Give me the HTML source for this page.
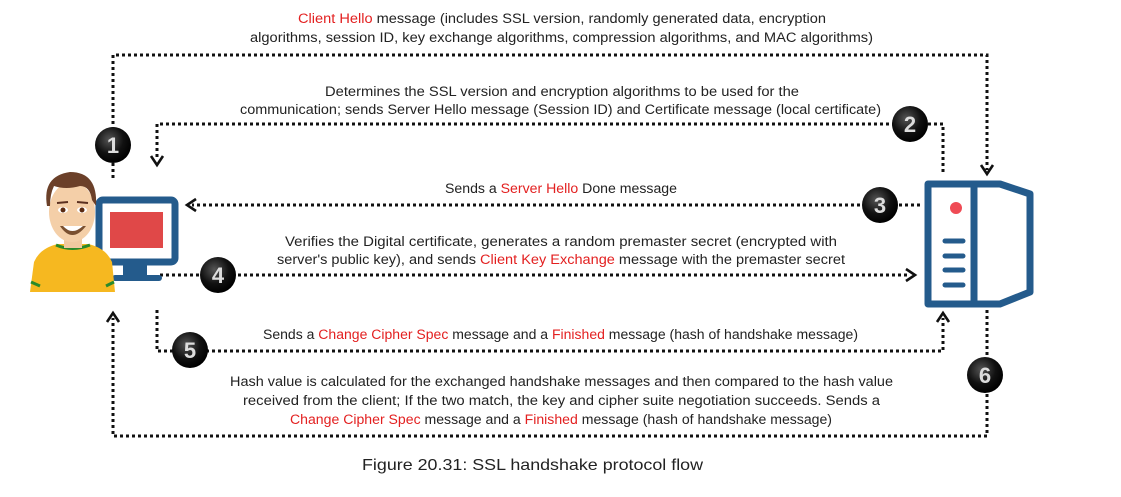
<!DOCTYPE html>
<html><head><meta charset="utf-8"><style>
html,body{margin:0;padding:0;background:#fff;}
svg{display:block;}
text{font-family:"Liberation Sans",sans-serif;font-size:13.5px;fill:#222;}
.r{fill:#e32020;}
.b{font-family:"Liberation Sans",sans-serif;font-weight:bold;font-size:22px;fill:#ddd;text-anchor:middle;}
.d{fill:none;stroke:#111;stroke-width:3;stroke-dasharray:3 3;}
.a{fill:none;stroke:#111;stroke-width:2.6;}
</style></head><body>
<svg width="1121" height="497" viewBox="0 0 1121 497" xmlns="http://www.w3.org/2000/svg">
<defs>
<radialGradient id="g" cx="40%" cy="35%" r="65%"><stop offset="0" stop-color="#555"/><stop offset="0.6" stop-color="#111"/><stop offset="1" stop-color="#000"/></radialGradient>
</defs>
<!-- dotted lines -->
<path class="d" d="M113 178 V55 H987 V170"/>
<path class="a" d="M981 165 L987 174 L993 165"/>
<path class="d" d="M943 172 V124 H157 V160"/>
<path class="a" d="M151 156 L157 165 L163 156"/>
<path class="d" d="M920 205 H192"/>
<path class="a" d="M196 199 L187 205 L196 211"/>
<path class="d" d="M160 275 H910"/>
<path class="a" d="M906 269 L915 275 L906 281"/>
<path class="d" d="M157 310 V351 H943 V318"/>
<path class="a" d="M937 322 L943 313 L949 322"/>
<path class="d" d="M987 310 V436 H113 V318"/>
<path class="a" d="M107 322 L113 313 L119 322"/>
<!-- badges -->
<g><circle cx="113" cy="145" r="18" fill="url(#g)"/><text x="113" y="153" class="b">1</text></g>
<g><circle cx="910" cy="124" r="18" fill="url(#g)"/><text x="910" y="132" class="b">2</text></g>
<g><circle cx="880" cy="205" r="18" fill="url(#g)"/><text x="880" y="213" class="b">3</text></g>
<g><circle cx="218" cy="275" r="18" fill="url(#g)"/><text x="218" y="283" class="b">4</text></g>
<g><circle cx="190" cy="350" r="18" fill="url(#g)"/><text x="190" y="358" class="b">5</text></g>
<g><circle cx="985" cy="375" r="18" fill="url(#g)"/><text x="985" y="383" class="b">6</text></g>
<!-- monitor -->
<rect x="99" y="200" width="76" height="62" rx="4" fill="#fff" stroke="#245b8c" stroke-width="7"/>
<rect x="110" y="212" width="53" height="36" fill="#e04848"/>
<rect x="123" y="265" width="24" height="12" fill="#245b8c"/>
<rect x="112" y="275" width="50" height="6" rx="3" fill="#245b8c"/>
<!-- man -->
<path d="M30 292 L34 262 Q40 248 58 244 L88 244 Q106 248 112 262 L115 292 Z" fill="#f6b820"/>
<path d="M31 282 L40 286 M114 282 L106 286" stroke="#2a8a2a" stroke-width="3"/>
<path d="M56 245 Q72 252 90 245" stroke="#2a8a2a" stroke-width="3" fill="none"/>
<rect x="64" y="236" width="18" height="12" fill="#f1c9a0"/>
<ellipse cx="72" cy="212" rx="23" ry="30" fill="#f4cfa8"/>
<path d="M47 206 Q42 176 70 172 Q98 172 96 206 L92 200 Q90 186 80 186 Q66 190 54 186 Q50 194 50 206 Z" fill="#6b4029"/>
<ellipse cx="63" cy="210" rx="5" ry="3" fill="#fff"/><circle cx="63" cy="210" r="2.5" fill="#5a2a10"/>
<ellipse cx="82" cy="210" rx="5" ry="3" fill="#fff"/><circle cx="82" cy="210" r="2.5" fill="#5a2a10"/>
<path d="M57 203 L68 202 M77 202 L88 203" stroke="#5a3020" stroke-width="2"/>
<path d="M60 226 Q72 244 86 226" fill="#7a5030"/>
<path d="M63 226 Q72 236 83 226 Z" fill="#fff"/>
<!-- server -->
<path d="M928 184 H1000 L1030 194 V292 L1000 304 H928 Z" fill="#fff" stroke="#245b8c" stroke-width="7" stroke-linejoin="round"/>
<line x1="974" y1="184" x2="974" y2="304" stroke="#245b8c" stroke-width="7"/>
<circle cx="956" cy="208" r="6" fill="#ef4b55"/>
<g stroke="#245b8c" stroke-width="5" stroke-linecap="round"><line x1="945" y1="241" x2="963" y2="241"/><line x1="945" y1="256" x2="963" y2="256"/><line x1="945" y1="270" x2="963" y2="270"/><line x1="945" y1="285" x2="963" y2="285"/></g>
<!-- text -->
<text x="298" y="23" textLength="528" lengthAdjust="spacingAndGlyphs"><tspan class="r">Client Hello</tspan> message (includes SSL version, randomly generated data, encryption</text>
<text x="250" y="42" textLength="623" lengthAdjust="spacingAndGlyphs">algorithms, session ID, key exchange algorithms, compression algorithms, and MAC algorithms)</text>
<text x="325" y="96" textLength="474" lengthAdjust="spacingAndGlyphs">Determines the SSL version and encryption algorithms to be used for the</text>
<text x="240" y="114" textLength="641" lengthAdjust="spacingAndGlyphs">communication; sends Server Hello message (Session ID) and Certificate message (local certificate)</text>
<text x="445" y="193" textLength="232" lengthAdjust="spacingAndGlyphs">Sends a <tspan class="r">Server Hello</tspan> Done message</text>
<text x="285" y="246" textLength="552" lengthAdjust="spacingAndGlyphs">Verifies the Digital certificate, generates a random premaster secret (encrypted with</text>
<text x="277" y="264" textLength="568" lengthAdjust="spacingAndGlyphs">server's public key), and sends <tspan class="r">Client Key Exchange</tspan> message with the premaster secret</text>
<text x="263" y="339" textLength="595" lengthAdjust="spacingAndGlyphs">Sends a <tspan class="r">Change Cipher Spec</tspan> message and a <tspan class="r">Finished</tspan> message (hash of handshake message)</text>
<text x="230" y="386" textLength="663" lengthAdjust="spacingAndGlyphs">Hash value is calculated for the exchanged handshake messages and then compared to the hash value</text>
<text x="243" y="405" textLength="637" lengthAdjust="spacingAndGlyphs">received from the client; If the two match, the key and cipher suite negotiation succeeds. Sends a</text>
<text x="290" y="424" textLength="542" lengthAdjust="spacingAndGlyphs"><tspan class="r">Change Cipher Spec</tspan> message and a <tspan class="r">Finished</tspan> message (hash of handshake message)</text>
<text x="362" y="470" textLength="341" lengthAdjust="spacingAndGlyphs" style="font-size:16px">Figure 20.31: SSL handshake protocol flow</text>
</svg>
</body></html>
